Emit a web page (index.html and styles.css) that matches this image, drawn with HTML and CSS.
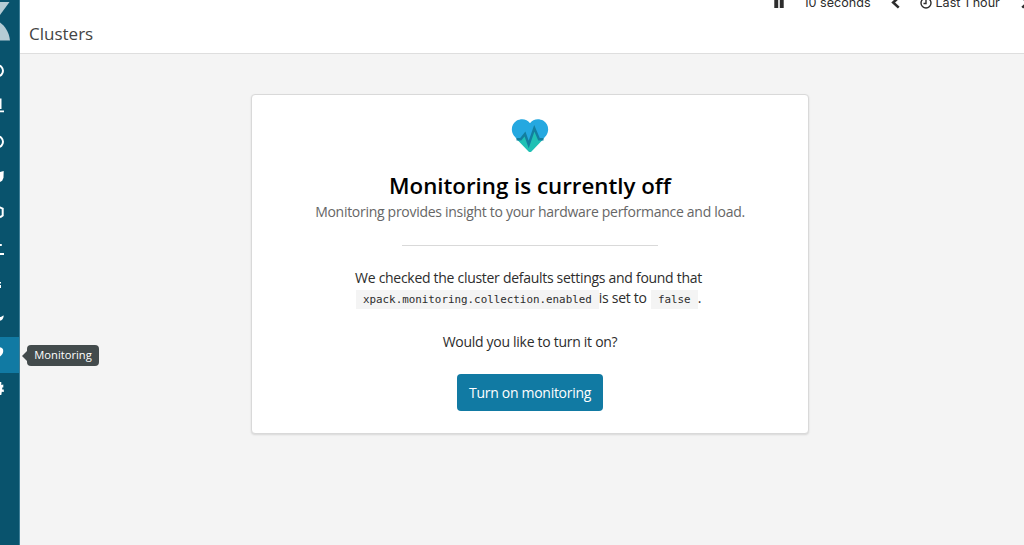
FILE: index.html
```
<!DOCTYPE html>
<html lang="en">

<head>
    <meta charset="utf-8">
    <title>Clusters</title>
    <link rel="stylesheet" href="styles.css">
</head>

<body>
    <nav class="sidebar">
        <svg class="logo" viewBox="0 0 20 53">
            <path d="M0 2H9.5L0 15z"/>
            <path d="M0 22.5C5 26 9 32 10 40.5H0z"/>
        </svg>
        <a class="item"><svg viewBox="0 0 20 35"><circle class="line" cx="-2.5" cy="17.8" r="5.5"/></svg></a>
        <a class="item"><svg viewBox="0 0 20 35"><path d="M0 9.500h1.500v10.500H0zM0 21.500h4v1.800H0z"/></svg></a>
        <a class="item"><svg viewBox="0 0 20 35"><circle class="line" cx="-2.5" cy="17.8" r="5.5"/></svg></a>
        <a class="item"><svg viewBox="0 0 20 35"><path d="M0 12l3.700-.9-.2 6.700-1.300 3L0 22z"/></svg></a>
        <a class="item"><svg viewBox="0 0 20 35"><path class="line" d="M-3 12.500H0l2.700 1.200v6.800L0 22.300"/></svg></a>
        <a class="item"><svg viewBox="0 0 20 35"><path d="M0 13h1.800v2H0zM0 22h4v2H0z"/></svg></a>
        <a class="item"><svg viewBox="0 0 20 35"><path d="M0 16h1v1.500H0zM0 19h1v3H0z"/></svg></a>
        <a class="item"><svg viewBox="0 0 20 35"><path d="M0 14.900c1.500.4 2.200-1 3.800-1.300-.3 3-1.800 5-3.800 5.200z"/></svg></a>
        <a class="item active"><svg viewBox="0 0 20 35"><path d="M0 10.200c4.400.4 4.200 6.300 0 9.400z"/></svg></a>
        <a class="item"><svg viewBox="0 0 20 35"><path d="M0 9h1.300v3l2-.5v3H2.200v2h1.600v2.500l-2-.3-.5 3.200H0z"/></svg></a>
    </nav>

    <div class="main">
        <header class="header">
            <div class="toolbar">
                <svg class="pause" viewBox="0 0 12 14"><path d="M0 0h5v14H0zM7 0h5v14H7z"/></svg>
                <span class="interval">10 seconds</span>
                <svg class="prev" viewBox="0 0 9 14"><path d="M8 1.500L2 7l6 5.500"/></svg>
                <svg class="clock" viewBox="0 0 12 12"><circle cx="6" cy="6" r="5"/><path d="M6 2.500v4H3.500"/></svg>
                <span class="range">Last 1 hour</span>
                <svg class="next" viewBox="0 0 9 14"><path d="M1 12.500L7 7 1 1.500"/></svg>
            </div>
            <h1 class="title">Clusters</h1>
        </header>

        <div class="panel">
            <svg class="heart" viewBox="0 0 38 34">
                <path class="heart-top" d="M19 4.200C22-.2 28-.7 32.500 1.800 37.500 5 38.600 11.500 35.200 16.500L30.500 22H7.500L2.800 16.500C-.6 11.500.5 5 5.500 1.800 10-.7 16-.2 19 4.200z"/>
                <path class="heart-bottom" d="M6.500 21H10.500L14.500 15.500 18 25.500 23.500 9.500 28.500 21H31.500L20.500 32.400Q19 33.700 17.500 32.400z"/>
                <path class="pulse" d="M5.500 20.300H9.700L14 15 17.700 25.500 23.300 9.300 28 20.300H32.500"/>
            </svg>
            <h2 class="heading">Monitoring is currently off</h2>
            <p class="subtitle">Monitoring provides insight to your hardware performance and load.</p>
            <hr class="rule">
            <p class="reason">We checked the cluster defaults settings and found that<br>
                <code>xpack.monitoring.collection.enabled</code><span class="set">is set to</span> <code>false</code>.</p>
            <p class="question">Would you like to turn it on?</p>
            <button class="button">Turn on monitoring</button>
        </div>
    </div>

    <div class="tooltip">Monitoring</div>
</body>

</html>
```

FILE: styles.css
```
body {
    display: flex;
    height: 545px;
    margin: 0;
    overflow: hidden;
    background-color: #f4f4f4;
    font-family: "Open Sans", sans-serif;
    color: #2d2d2d;
}

p, h1, h2 {
    margin: 0;
    font-weight: 400;
    white-space: nowrap;
}

.sidebar {
    box-sizing: border-box;
    flex: none;
    width: 20px;
    overflow: hidden;
    border-right: 1px solid #3f7f98;
    background-color: #09536d;
}

.logo {
    display: block;
    width: 20px;
    height: 53px;
    fill: #b5ccd5;
}

.item {
    display: block;
    height: 35.5px;
}

.item svg {
    display: block;
    width: 20px;
    height: 35px;
    fill: #fff;
}

.item .line {
    fill: none;
    stroke: #fff;
    stroke-width: 2;
}

.active {
    background-color: #117aa3;
}

.main {
    flex: 1;
    min-width: 0;
}

.header {
    box-sizing: border-box;
    height: 54px;
    overflow: hidden;
    border-bottom: 1px solid #dedede;
    background-color: #fff;
}

.toolbar {
    display: flex;
    align-items: center;
    height: 20px;
    margin-top: -7.5px;
    padding-left: 752.5px;
    font-family: Inter, "Liberation Sans", sans-serif;
    font-size: 12.6px;
    white-space: nowrap;
}

.toolbar svg {
    flex: none;
    fill: none;
    stroke: #2d2d2d;
}

.toolbar .pause {
    width: 12px;
    height: 11px;
    fill: #2d2d2d;
    stroke: none;
}

.interval {
    width: 67px;
    margin-left: 19px;
}

.toolbar .prev,
.toolbar .next {
    width: 9px;
    height: 13px;
    stroke-width: 2.8;
}

.prev {
    margin-left: 20px;
}

.clock {
    width: 12px;
    height: 12px;
    margin-left: 20px;
    stroke-width: 1.4;
}

.range {
    width: 64px;
    margin-left: 4px;
}

.next {
    margin-left: 21px;
}

.title {
    margin: 9.5px 0 0 9px;
    font-size: 17px;
    line-height: 24px;
    color: #444;
}

.panel {
    box-sizing: border-box;
    display: flex;
    flex-direction: column;
    align-items: center;
    width: 558px;
    height: 340px;
    margin: 40px 0 0 231px;
    padding-top: 24px;
    border: 1px solid #d9d9d9;
    border-radius: 4px;
    background-color: #fff;
    box-shadow: 0 1px 2px rgba(0, 0, 0, .12);
}

.heart {
    width: 38px;
    height: 34px;
}

.heart-top {
    fill: #25a8e0;
}

.heart-bottom {
    fill: #1fc0b4;
}

.pulse {
    fill: none;
    stroke: #137e9f;
    stroke-width: 2.4;
}

.heading {
    margin-top: 16px;
    font-size: 22.3px;
    font-weight: 600;
    line-height: 34px;
    color: #000;
}

.subtitle {
    font-size: 14px;
    letter-spacing: -.29px;
    line-height: 18px;
    color: #666;
}

.rule {
    width: 256px;
    height: 1px;
    margin: 24px 0 22px;
    border: 0;
    background-color: #d9d9d9;
}

.reason {
    margin-right: 3px;
    font-size: 14px;
    letter-spacing: -.29px;
    line-height: 20px;
    text-align: center;
}

code {
    display: inline-block;
    padding: 0 7px;
    background-color: #f4f4f4;
    font-family: "DejaVu Sans Mono", monospace;
    font-size: 10.87px;
    letter-spacing: 0;
    line-height: 19px;
}

.set {
    margin-right: 1px;
}

.question {
    margin-top: 22px;
    font-size: 14px;
    letter-spacing: -.29px;
    line-height: 21px;
}

.button {
    width: 146px;
    height: 37px;
    margin-top: 22px;
    padding: 0;
    border: 0;
    border-radius: 4px;
    background-color: #117aa3;
    font-family: inherit;
    font-size: 14px;
    letter-spacing: -.29px;
    color: #fff;
}

.tooltip {
    position: absolute;
    top: 345px;
    left: 27px;
    width: 72px;
    height: 21px;
    border-radius: 4px;
    background-color: #434b4c;
    font-size: 11.2px;
    line-height: 20px;
    text-align: center;
    color: #fff;
}

.tooltip::before {
    content: "";
    position: absolute;
    top: 6px;
    left: -5px;
    border: 5px solid transparent;
    border-left: 0;
    border-right-color: #434b4c;
}
```
